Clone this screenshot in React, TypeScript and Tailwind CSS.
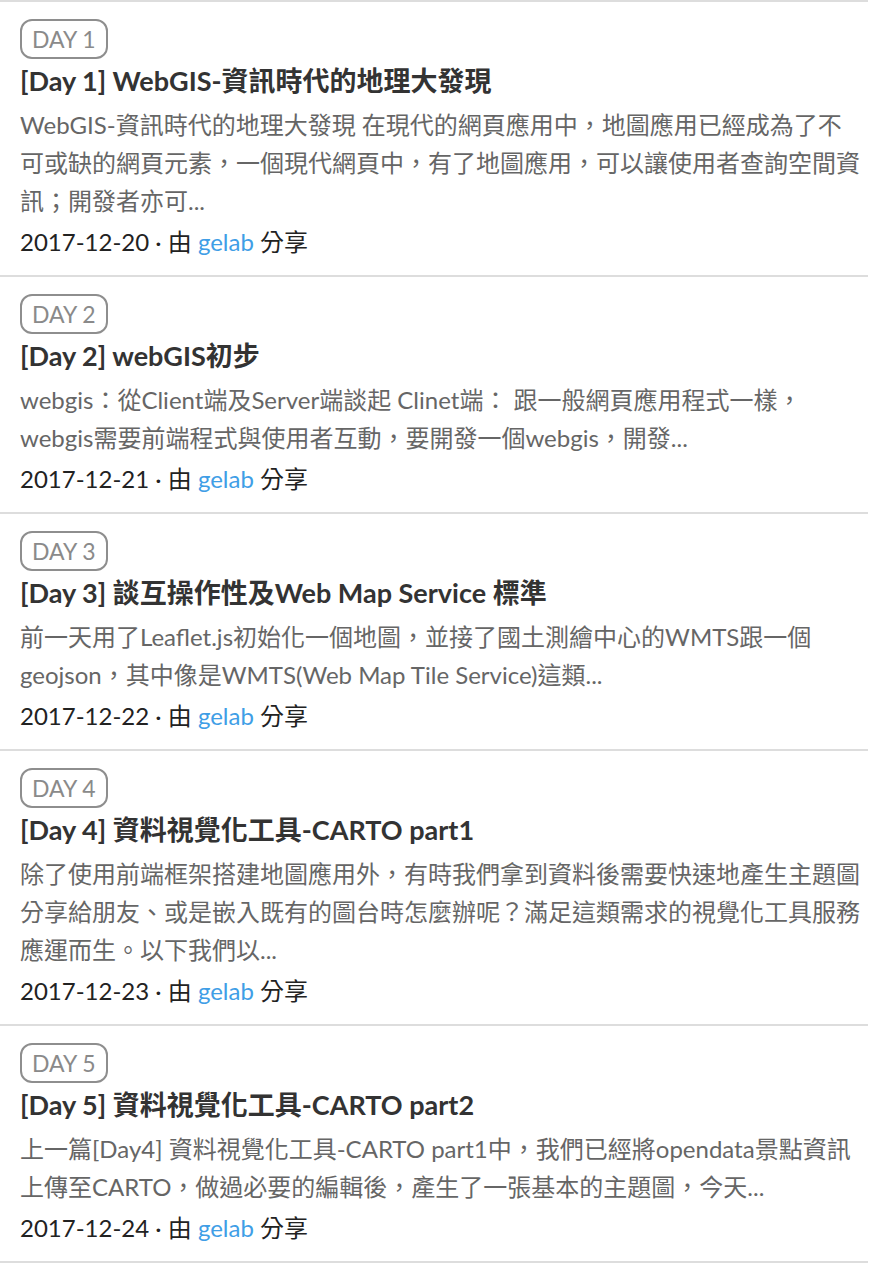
const posts = [
  {
    day: 1,
    title: '[Day 1] WebGIS-資訊時代的地理大發現',
    excerpt:
      'WebGIS-資訊時代的地理大發現 在現代的網頁應用中，地圖應用已經成為了不可或缺的網頁元素，一個現代網頁中，有了地圖應用，可以讓使用者查詢空間資訊；開發者亦可...',
    date: '2017-12-20',
  },
  {
    day: 2,
    title: '[Day 2] webGIS初步',
    excerpt:
      'webgis：從Client端及Server端談起 Clinet端： 跟一般網頁應用程式一樣，webgis需要前端程式與使用者互動，要開發一個webgis，開發...',
    date: '2017-12-21',
  },
  {
    day: 3,
    title: '[Day 3] 談互操作性及Web Map Service 標準',
    excerpt:
      '前一天用了Leaflet.js初始化一個地圖，並接了國土測繪中心的WMTS跟一個geojson，其中像是WMTS(Web Map Tile Service)這類...',
    date: '2017-12-22',
  },
  {
    day: 4,
    title: '[Day 4] 資料視覺化工具-CARTO part1',
    excerpt:
      '除了使用前端框架搭建地圖應用外，有時我們拿到資料後需要快速地產生主題圖分享給朋友、或是嵌入既有的圖台時怎麼辦呢？滿足這類需求的視覺化工具服務應運而生。以下我們以...',
    date: '2017-12-23',
  },
  {
    day: 5,
    title: '[Day 5] 資料視覺化工具-CARTO part2',
    excerpt:
      '上一篇[Day4] 資料視覺化工具-CARTO part1中，我們已經將opendata景點資訊上傳至CARTO，做過必要的編輯後，產生了一張基本的主題圖，今天...',
    date: '2017-12-24',
  },
];

export default function App() {
  return (
    <div className="min-h-screen bg-white font-['Lato','Noto_Sans_CJK_TC',sans-serif]">
      <ul className="w-[868px] border-t-2 border-[#dddddd]">
        {posts.map((post) => (
          <li key={post.day} className="border-b-2 border-[#dddddd] pl-5 pr-[6px] pt-[17px] pb-[14px]">
            <span className="inline-block h-[40px] rounded-[12px] border-2 border-[#8e8e8e] px-[10px] text-[23px] leading-[36px] text-[#8a8a8a]">
              DAY {post.day}
            </span>
            <h3 className="mt-[2px] text-[27px] font-bold leading-[40px] text-[#333333]">{post.title}</h3>
            <p className="mt-[5px] text-[24px] leading-[38px] text-[#666666]">{post.excerpt}</p>
            <div className="mt-[3px] text-[24px] leading-[38px] text-[#222222]">
              {post.date} · 由 <a className="text-[#3f9ee6]">gelab</a> 分享
            </div>
          </li>
        ))}
      </ul>
    </div>
  );
}
